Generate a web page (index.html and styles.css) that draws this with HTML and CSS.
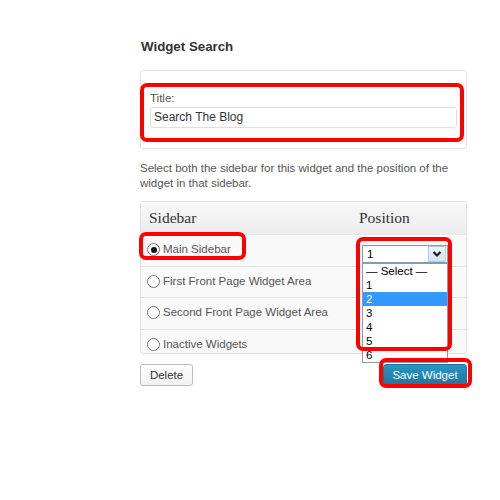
FILE: index.html
```html
<!DOCTYPE html>
<html lang="en">
<head>
  <meta charset="UTF-8">
  <title>Widget Search</title>
  <link rel="stylesheet" href="styles.css">
</head>
<body>
  <div class="widget">
    <h3 class="widget-title">Widget Search</h3>

    <div class="widget-inside">
      <label class="field-label" for="title">Title:</label>
      <div class="text-input" id="title">Search The Blog</div>
    </div>

    <p class="desc">Select both the sidebar for this widget and the position of the widget in that sidebar.</p>

    <table class="sidebars">
      <thead>
        <tr>
          <th class="col-sidebar">Sidebar</th>
          <th class="col-position">Position</th>
        </tr>
      </thead>
      <tbody>
        <tr class="row-1">
          <td><span class="radio checked"></span>Main Sidebar</td>
          <td>
            <div class="select-wrap">
              <div class="select">
                <span class="select-value">1</span>
                <span class="select-arrow">
                  <svg width="10" height="8" viewBox="0 0 10 8"><path d="M1.5 2 L5 5.5 L8.5 2" fill="none" stroke="#1a1a1a" stroke-width="2.2"/></svg>
                </span>
              </div>
              <ul class="options">
                <li>&mdash; Select &mdash;</li>
                <li>1</li>
                <li class="selected">2</li>
                <li>3</li>
                <li>4</li>
                <li>5</li>
                <li>6</li>
              </ul>
            </div>
          </td>
        </tr>
        <tr class="row-2">
          <td><span class="radio"></span>First Front Page Widget Area</td>
          <td></td>
        </tr>
        <tr class="row-3">
          <td><span class="radio"></span>Second Front Page Widget Area</td>
          <td></td>
        </tr>
        <tr class="row-4">
          <td><span class="radio"></span>Inactive Widgets</td>
          <td></td>
        </tr>
      </tbody>
    </table>

    <div class="actions">
      <button class="btn">Delete</button>
      <button class="btn btn-primary">Save Widget</button>
    </div>
  </div>

  <!-- red annotation boxes from the tutorial -->
  <div class="mark mark-title"></div>
  <div class="mark mark-main"></div>
  <div class="mark mark-position"></div>
  <div class="mark mark-save"></div>
</body>
</html>
```

FILE: styles.css
```css
body { margin: 0; background: #fff; font-family: Arial, "Liberation Sans", sans-serif; font-size: 11.5px; color: #333; position: relative; min-height: 500px; }

.widget { width: 327px; margin-left: 140px; padding-top: 39px; }
.widget-title { margin: 0 0 0 1px; font-size: 13.3px; line-height: 16px; font-weight: bold; color: #333; }

.widget-inside { margin-top: 15px; border: 1px solid #e3e3e3; border-radius: 3px; padding: 20px 9px 20px 9px; }
.field-label { display: block; line-height: 15px; color: #555; margin-bottom: 1px; }
.text-input { height: 19px; line-height: 19px; border: 1px solid #dfdfdf; border-radius: 3px; padding: 0 3px; color: #333; background: #fff; font-size: 12px; }

.desc { margin: 12px 0 0 0; line-height: 15px; color: #555; }

.sidebars { margin-top: 10px; width: 100%; border-collapse: separate; border-spacing: 0; border: 1px solid #dfdfdf; border-radius: 3px; background: #f9f9f9; }
.sidebars th { box-sizing: border-box; height: 33px; padding: 0 8px; text-align: left; font-family: "Liberation Serif", Georgia, serif; font-weight: normal; font-size: 15.5px; color: #333; background: linear-gradient(#f9f9f9, #ececec); border-bottom: 1px solid #e6e6e6; }
.sidebars .col-sidebar { width: 210px; }
.sidebars td { box-sizing: border-box; padding: 6px 8px 0 8px; vertical-align: top; line-height: 15px; color: #555; border-top: 1px solid #fff; border-bottom: 1px solid #e3e3e3; }
.sidebars .row-1 td { height: 32px; }
.sidebars .row-2 td { height: 31px; }
.sidebars .row-3 td { height: 32px; }
.sidebars .row-4 td { height: 23px; border-bottom: 0; }

.radio { display: inline-block; width: 11px; height: 11px; border: 1px solid #777; border-radius: 50%; background: #fff; vertical-align: -3px; margin: 0 3px 0 -2px; position: relative; }
.radio.checked::after { content: ""; position: absolute; left: 2.5px; top: 2.5px; width: 6px; height: 6px; border-radius: 50%; background: #111; }

.select-wrap { position: relative; margin: 3px 0 0 3px; width: 86px; }
.select { height: 16px; border: 1px solid #7f9db9; background: #fff; display: flex; align-items: center; justify-content: space-between; }
.select-value { padding-left: 4px; color: #000; line-height: 16px; }
.select-arrow { width: 16px; height: 14px; margin-right: 1px; border: 1px solid #b8cbe6; background: linear-gradient(#eef4fc, #d6e4f6); display: flex; align-items: center; justify-content: center; }
.options { position: absolute; left: 0; top: 18px; width: 84px; margin: 0; padding: 0; list-style: none; background: #fff; border: 1px solid #7f9db9; z-index: 2; }
.options li { height: 14px; line-height: 14px; padding-left: 3px; color: #000; }
.options li.selected { background: #3399ff; color: #fff; }

.actions { display: flex; justify-content: space-between; margin-top: 10px; }
.btn { height: 22px; width: 53px; padding: 0; font-family: Arial, "Liberation Sans", sans-serif; font-size: 11.5px; border-radius: 3px; border: 1px solid #bbb; background: linear-gradient(#fefefe, #f2f2f2); color: #333; }
.btn-primary { width: 84px; border-color: #21759b; background: linear-gradient(#2a95c5, #21759b); color: #fff; }

.mark { position: absolute; border: 4px solid #f00; border-radius: 7px; box-sizing: border-box; z-index: 5; }
.mark-title { left: 140px; top: 83px; width: 324px; height: 59px; }
.mark-main { left: 139px; top: 232px; width: 107px; height: 28px; }
.mark-position { left: 356px; top: 237px; width: 96px; height: 114px; }
.mark-save { left: 379px; top: 358px; width: 93px; height: 30px; }
```
